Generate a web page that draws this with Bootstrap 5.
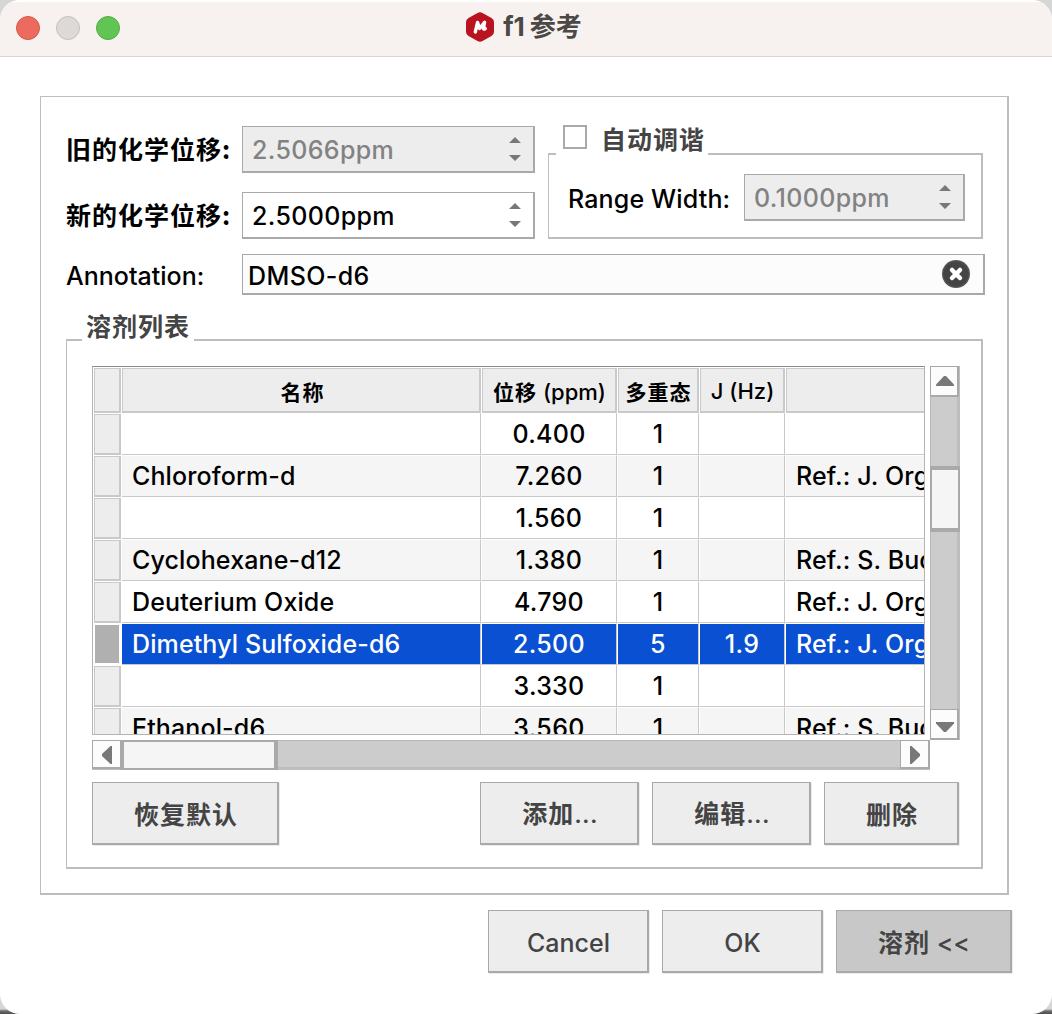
<!DOCTYPE html>
<html lang="zh-CN">
<head>
<meta charset="utf-8">
<title>f1参考</title>
<link href="https://cdn.jsdelivr.net/npm/bootstrap@5.3.0/dist/css/bootstrap.min.css" rel="stylesheet">
<style>
body{width:1052px;height:1014px;overflow:hidden;background:linear-gradient(#d6d6d6 0,#d6d6d6 1009px,#6e6e6e 1011px,#4c4c4c);font-family:Inter,"Noto Sans CJK SC",sans-serif;font-size:25px;line-height:30px;color:#000;font-weight:450}
.win{width:1052px;height:1014px;background:#fff;border-radius:20px;overflow:hidden}
.titlebar{height:57px;background:#f7f2ef;border-bottom:1px solid #d8d6d5;box-shadow:inset 0 2px 1px #fff}
.lights{left:16px;top:16px;gap:16px}
.light{width:24px;height:24px;border-radius:50%;border:1px solid}
.light-r{background:#ed6a5e;border-color:#d9574b}
.light-g{background:#ddd9d7;border-color:#c3bfbd}
.light-v{background:#61c554;border-color:#52ae43}
.wtitle{font-weight:700;color:#4b4846;font-size:26px;padding-bottom:3px;padding-right:4px}
.wtitle svg{margin-right:9px}
.wtitle span{padding-top:1px}
.cj{font-family:"Noto Sans CJK SC",sans-serif;font-weight:700;letter-spacing:1px}
.frm{border:1px solid #bdbdbd;border-right-width:2px;border-bottom-width:2px}
.outer{margin:39px 0 0 40px;width:969px;height:799px;padding:29px 22px 0 25px}
.lab{width:176px;padding-top:2px}
.lab.cj{padding:0 0 3px}
.fld{border:1px solid #a9a9a9;border-right-width:2px;border-bottom-width:2px;background:#fff}
.spin{height:47px;padding:0 12px 0 9px}
.spin span{padding-top:2px;letter-spacing:.35px}
.spin.off{background:#ededed;color:#828282}
.spin svg{fill:#787878}
.leftcol{width:469px;gap:19px}
.auto{width:435px;height:86px;margin:27px 0 0 13px;border-top-width:2px;padding:3px 16px 0 19px}
.rw{padding-top:3px;letter-spacing:.15px}
.tune{left:7px;top:-34px;height:34px;width:152px;background:#fff;padding-left:7px;color:#444}
.tick{width:24px;height:24px;border:2px solid #a9a9a9;background:#fff;margin:4px 14px 0 0}
.tune .cj{padding-top:2px}
.annot{margin-top:15px}
.edit{width:743px;height:41px;padding:0 13px 0 5px;background:#fcfcfc}
.edit span{padding-top:3px;letter-spacing:.4px}
.solv{margin-top:44px;width:917px;height:530px;border-top-width:2px;padding:25px 22px 0 25px}
.solvcap{left:15px;top:-31px;width:112px;height:31px;background:#fff;padding-left:4px;color:#444}
.view{width:833px;height:369px;flex:none;border:1px solid #b4b4b4;border-top-color:#8a8a8a;overflow:hidden}
.grid-t{width:831px;table-layout:fixed;border-collapse:separate;border-spacing:0}
.grid-t tr{height:42px}
.grid-t thead tr{height:46px}
.grid-t th,.grid-t td{padding:0;white-space:nowrap;overflow:hidden;vertical-align:middle;line-height:30px}
.grid-t td{height:42px;border:1px solid #fff;border-right-color:#c8c8c8;border-bottom-color:#c8c8c8;text-align:center;letter-spacing:.3px}
.grid-t td.nm,.grid-t td.rf{text-align:left;padding-left:10px;letter-spacing:.12px}
.grid-t td.nm{border-left:0}
.grid-t td.rf{border-right:0}
.grid-t .alt td{background:#f5f5f5}
.grid-t .sel td{background:#0a50d2;color:#fff}
.hd{height:45px;margin:1px 0 0 1px;border:1px solid #c9c9c9;border-right-width:2px;border-bottom-width:2px;background:#ededed;font-size:22px;font-weight:500;text-align:center;line-height:44px;padding-left:1px}
.hd .cj{font-size:21px}
.hd0{margin-left:0;padding-left:3px}
.vh{height:41px;width:27px;margin:1px 0 0 1px;border:1px solid #c9c9c9;border-right-width:2px;border-bottom-width:2px;background:#ededed}
.sel .vh{border-color:#fff;background:#b0b0b0}
.vbar{width:30px;height:374px;flex:none;margin-left:5px;background:#ccc;border-left:1px solid #b8b8b8;border-right:3px solid #bdbdbd}
.sbtn{background:#fcfcfc;border:1px solid #a9a9a9;border-right-width:2px;border-bottom-width:2px;width:29px;height:31px;flex:none}
.sbtn svg{fill:#787878}
.vbar .sbtn{margin-left:-1px;padding-left:1px}
.vbar .sbtn:last-child{padding-top:5px}
.vthumb{width:30px;height:66px;margin:69px 0 177px -1px;border:2px solid #a9a9a9;border-top-width:4px;border-bottom-width:4px;background:#f5f5f5;flex:none}
.hbar{width:838px;height:30px;background:#ccc;border-top:1px solid #b8b8b8;border-bottom:3px solid #bdbdbd}
.hbar .sbtn{height:29px;margin-top:-1px;width:30px;padding-top:2px}
.hthumb{width:158px;height:30px;margin:-1px auto 0 -2px;border:2px solid #a9a9a9;border-left-width:4px;border-right-width:4px;background:#f5f5f5;flex:none}
.pb,.pb:hover{height:63px;border:1px solid #a9a9a9;border-right-width:2px;border-bottom-width:2px;border-radius:0;background:#ededed;color:#444;font-size:25px;line-height:30px;padding:3px 0 0 1px;font-weight:500;box-shadow:1px 1px 0 #ececec}
.pb.cj{font-weight:700;padding:0 0 0 2px}
.dots{font-family:Inter,sans-serif;font-weight:500;letter-spacing:.3px}
.pb.on{background:#c8c8c8;padding-top:1px}
</style>
<script src="https://cdn.jsdelivr.net/npm/bootstrap@5.3.0/dist/js/bootstrap.bundle.min.js"></script>
</head>
<body>
<div class="win">
  <header class="titlebar position-relative d-flex align-items-center justify-content-center">
    <div class="lights position-absolute d-flex"><span class="light light-r"></span><span class="light light-g"></span><span class="light light-v"></span></div>
    <div class="wtitle d-flex align-items-center">
      <svg width="28" height="30" viewBox="0 0 28 30"><path d="M11.5 1Q14-.6 16.500 1L25.500 6Q28 7.500 28 10V20Q28 22.500 25.500 24L16.500 29Q14 30.600 11.500 29L2.500 24Q0 22.500 0 20V10Q0 7.500 2.500 6Z" fill="#b9131f"/><path d="M9.300 20L11.600 10.500L13.600 16.500L18.600 10.300L17.400 16Q17.300 18 19.300 16.600" fill="none" stroke="#fff" stroke-width="3.400" stroke-linecap="round" stroke-linejoin="round"/></svg>
      <span>f1</span><span style="margin-left:5px">参考</span>
    </div>
  </header>

  <main class="outer frm">
    <div class="d-flex align-items-start">
      <div class="leftcol d-flex flex-column">
        <div class="d-flex align-items-center"><label class="lab cj">旧的化学位移:</label><div class="fld spin off flex-fill d-flex align-items-center justify-content-between"><span>2.5066ppm</span><svg width="12" height="24"><path d="M0 6L6 0L12 6ZM0 18L6 24L12 18Z"/></svg></div></div>
        <div class="d-flex align-items-center"><label class="lab cj">新的化学位移:</label><div class="fld spin flex-fill d-flex align-items-center justify-content-between"><span>2.5000ppm</span><svg width="12" height="24"><path d="M0 6L6 0L12 6ZM0 18L6 24L12 18Z"/></svg></div></div>
      </div>
      <section class="auto frm position-relative d-flex align-items-center">
        <div class="tune position-absolute d-flex align-items-start"><span class="tick"></span><span class="cj">自动调谐</span></div>
        <span class="rw me-auto">Range Width:</span>
        <div class="fld spin off d-flex align-items-center justify-content-between" style="width:221px"><span>0.1000ppm</span><svg width="12" height="24"><path d="M0 6L6 0L12 6ZM0 18L6 24L12 18Z"/></svg></div>
      </section>
    </div>
    <div class="annot d-flex align-items-center"><label class="lab">Annotation:</label>
      <div class="fld edit d-flex align-items-center justify-content-between"><span>DMSO-d6</span>
        <svg width="28" height="28" viewBox="0 0 28 28"><circle cx="14" cy="14" r="14" fill="#555"/><circle cx="14" cy="14" r="12.500" fill="#444"/><path d="M10 10L18 18M18 10L10 18" stroke="#fff" stroke-width="4.500" stroke-linecap="round"/></svg></div>
    </div>

    <section class="solv frm position-relative">
      <div class="solvcap cj position-absolute">溶剂列表</div>
      <div class="d-flex align-items-start">
        <div class="view">
          <table class="grid-t">
            <colgroup><col style="width:29px"><col style="width:359px"><col style="width:136px"><col style="width:82px"><col style="width:86px"><col style="width:139px"></colgroup>
            <thead><tr><th><div class="hd" style="width:27px"></div></th><th><div class="hd hd0"><span class="cj">名称</span></div></th><th><div class="hd"><span class="cj">位移</span> (ppm)</div></th><th><div class="hd"><span class="cj">多重态</span></div></th><th><div class="hd">J (Hz)</div></th><th><div class="hd border-end-0"></div></th></tr></thead>
            <tbody>
              <tr><th><div class="vh"></div></th><td class="nm"></td><td>0.400</td><td>1</td><td></td><td class="rf"></td></tr>
              <tr class="alt"><th><div class="vh"></div></th><td class="nm">Chloroform-d</td><td>7.260</td><td>1</td><td></td><td class="rf">Ref.: J. Org</td></tr>
              <tr><th><div class="vh"></div></th><td class="nm"></td><td>1.560</td><td>1</td><td></td><td class="rf"></td></tr>
              <tr class="alt"><th><div class="vh"></div></th><td class="nm">Cyclohexane-d12</td><td>1.380</td><td>1</td><td></td><td class="rf">Ref.: S. Bud</td></tr>
              <tr><th><div class="vh"></div></th><td class="nm">Deuterium Oxide</td><td>4.790</td><td>1</td><td></td><td class="rf">Ref.: J. Org</td></tr>
              <tr class="sel"><th><div class="vh"></div></th><td class="nm">Dimethyl Sulfoxide-d6</td><td>2.500</td><td>5</td><td>1.9</td><td class="rf">Ref.: J. Org</td></tr>
              <tr><th><div class="vh"></div></th><td class="nm"></td><td>3.330</td><td>1</td><td></td><td class="rf"></td></tr>
              <tr class="alt"><th><div class="vh"></div></th><td class="nm">Ethanol-d6</td><td>3.560</td><td>1</td><td></td><td class="rf">Ref.: S. Bud</td></tr>
            </tbody>
          </table>
        </div>
        <div class="vbar d-flex flex-column">
          <div class="sbtn d-flex align-items-center justify-content-center"><svg width="18" height="10"><path d="M0 10V8.500L8 0H10L18 8.500V10Z"/></svg></div>
          <div class="vthumb"></div>
          <div class="sbtn d-flex align-items-center justify-content-center"><svg width="18" height="10"><path d="M0 0V1.500L8 10H10L18 1.500V0Z"/></svg></div>
        </div>
      </div>
      <div class="hbar d-flex">
        <div class="sbtn d-flex align-items-center justify-content-center"><svg width="10" height="18"><path d="M10 0H8.500L0 8V10L8.500 18H10Z"/></svg></div>
        <div class="hthumb"></div>
        <div class="sbtn d-flex align-items-center justify-content-center"><svg width="10" height="18"><path d="M0 0H1.500L10 8V10L1.500 18H0Z"/></svg></div>
      </div>
      <div class="d-flex" style="margin-top:12px;gap:13px">
        <button class="btn pb cj me-auto" style="width:187px">恢复默认</button>
        <button class="btn pb cj" style="width:159px">添加<span class="dots">...</span></button>
        <button class="btn pb cj" style="width:159px">编辑<span class="dots">...</span></button>
        <button class="btn pb cj" style="width:135px">删除</button>
      </div>
    </section>
  </main>
  <footer class="d-flex justify-content-end" style="margin:15px 40px 0 0;gap:13px">
    <button class="btn pb" style="width:161px">Cancel</button>
    <button class="btn pb" style="width:161px">OK</button>
    <button class="btn pb on" style="width:176px"><span class="cj">溶剂</span> &lt;&lt;</button>
  </footer>
</div>
</body>
</html>
